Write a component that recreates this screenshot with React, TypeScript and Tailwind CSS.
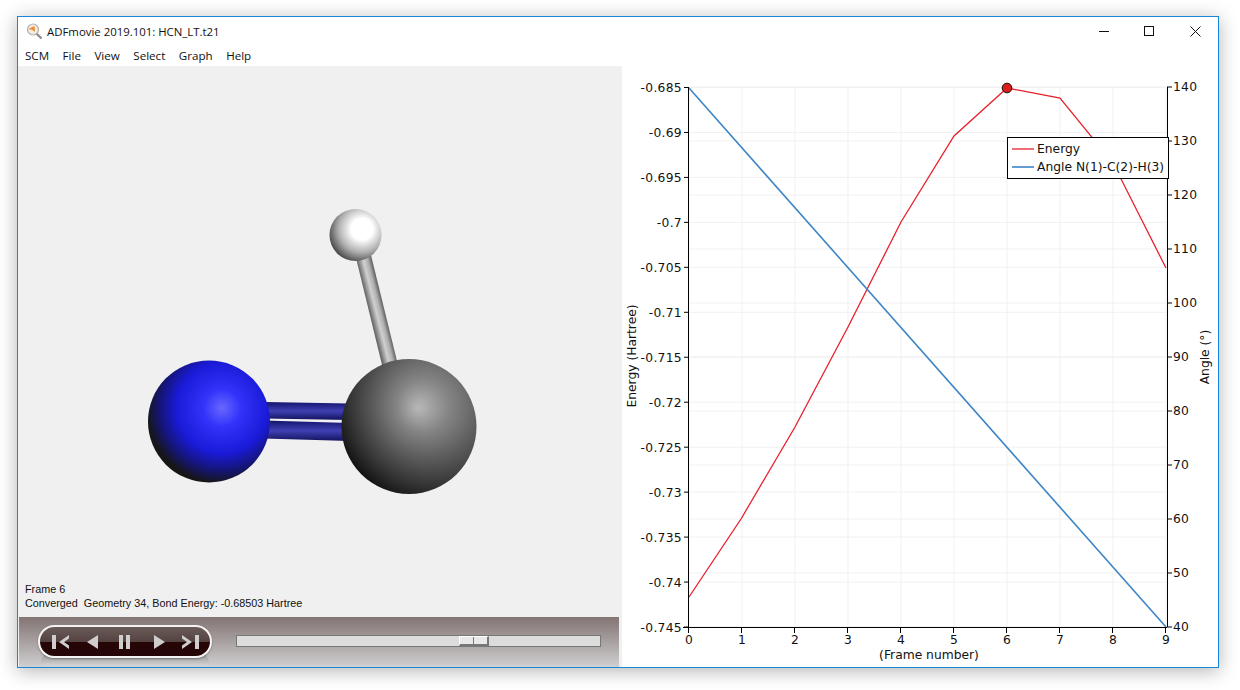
import React from 'react';

const MENU_ITEMS = ['SCM', 'File', 'View', 'Select', 'Graph', 'Help'];

const ENERGY_LABELS = ['-0.685', '-0.69', '-0.695', '-0.7', '-0.705', '-0.71', '-0.715', '-0.72', '-0.725', '-0.73', '-0.735', '-0.74', '-0.745'];
const ANGLE_LABELS = ['140', '130', '120', '110', '100', '90', '80', '70', '60', '50', '40'];
const FRAME_LABELS = ['0', '1', '2', '3', '4', '5', '6', '7', '8', '9'];

const ENERGY_POINTS = '689,597 741,519 795,427 848,327 901,222 954,136 1007,88 1060,98 1113,163 1166,268';

const frameX = (i: number) => 689 + i * 53;
const energyY = (i: number) => 87.5 + i * 44.96;
const angleY = (i: number) => 87 + i * 54;

function AppIcon() {
  return (
    <svg width="17" height="17" viewBox="0 0 17 17" className="shrink-0">
      <line x1="10" y1="10" x2="15.5" y2="15.5" stroke="#8a8a8a" strokeWidth="2.2" />
      <circle cx="7" cy="6.5" r="5.5" fill="#f1ece6" stroke="#b5aca4" strokeWidth="1.2" />
      <path d="M2.5 6 L8.5 3 L9 9 L6.5 7 Z" fill="#f08a2c" />
    </svg>
  );
}

function WindowButtons() {
  return (
    <div className="flex items-center">
      <svg width="46" height="28" viewBox="0 0 46 28">
        <line x1="19" y1="14.5" x2="29" y2="14.5" stroke="#111" />
      </svg>
      <svg width="46" height="28" viewBox="0 0 46 28">
        <rect x="18.5" y="9.5" width="9" height="9" fill="none" stroke="#111" />
      </svg>
      <svg width="46" height="28" viewBox="0 0 46 28">
        <path d="M18.5 9.5 L28.5 19.5 M28.5 9.5 L18.5 19.5" stroke="#111" fill="none" />
      </svg>
    </div>
  );
}

function Molecule() {
  return (
    <svg viewBox="18 66 601 510" className="h-[510px] w-[601px]">
      <defs>
        <radialGradient id="blueAtom" gradientUnits="userSpaceOnUse" cx="222" cy="408" r="76">
          <stop offset="0" stopColor="#6868ff" />
          <stop offset="0.25" stopColor="#3232fa" />
          <stop offset="0.6" stopColor="#1a1ad8" />
          <stop offset="0.82" stopColor="#151578" />
          <stop offset="1" stopColor="#161616" />
        </radialGradient>
        <radialGradient id="greyAtom" gradientUnits="userSpaceOnUse" cx="438" cy="400" r="106" fx="418" fy="408">
          <stop offset="0" stopColor="#b8b8b8" />
          <stop offset="0.25" stopColor="#848484" />
          <stop offset="0.5" stopColor="#5e5e5e" />
          <stop offset="0.8" stopColor="#333333" />
          <stop offset="1" stopColor="#141414" />
        </radialGradient>
        <radialGradient id="whiteAtom" gradientUnits="userSpaceOnUse" cx="362" cy="229" r="36">
          <stop offset="0" stopColor="#ffffff" />
          <stop offset="0.3" stopColor="#ffffff" />
          <stop offset="0.65" stopColor="#b0b0b0" />
          <stop offset="1" stopColor="#3c3c3c" />
        </radialGradient>
        <linearGradient id="hBond" gradientUnits="userSpaceOnUse" x1="370" y1="314" x2="384" y2="310.5">
          <stop offset="0" stopColor="#666666" />
          <stop offset="0.45" stopColor="#d0d0d0" />
          <stop offset="0.75" stopColor="#b0b0b0" />
          <stop offset="1" stopColor="#6b6b6b" />
        </linearGradient>
        <linearGradient id="blueBond" x1="0" y1="0" x2="0" y2="1">
          <stop offset="0" stopColor="#14146e" />
          <stop offset="0.5" stopColor="#4040b4" />
          <stop offset="1" stopColor="#12125e" />
        </linearGradient>
      </defs>
      <polygon points="356,258 371,255 398,365 383,369" fill="url(#hBond)" />
      <polygon points="264,402 350,403.5 350,420 264,418.5" fill="url(#blueBond)" />
      <polygon points="264,420.5 350,423 350,441 264,438.5" fill="url(#blueBond)" />
      <circle cx="209" cy="421.5" r="61" fill="url(#blueAtom)" />
      <circle cx="409" cy="426.5" r="67.5" fill="url(#greyAtom)" />
      <circle cx="355.5" cy="235" r="26" fill="url(#whiteAtom)" />
    </svg>
  );
}

function PlayerControls() {
  return (
    <div className="relative">
      <div className="absolute left-[3px] top-[27px] h-[14px] w-[168px] rounded-b-[4px] rounded-t-[14px] bg-gradient-to-b from-[#8f8b8b] to-[#d6d6d6]" />
      <div className="relative flex h-[33px] w-[174px] items-center overflow-hidden rounded-full border-2 border-[#f4f4f4] bg-gradient-to-b from-[#6a5a58] from-0% via-[#544341] via-50% to-[#250505] to-50% pl-[12px] shadow-[0_1px_2px_rgba(0,0,0,0.35)]">
        <svg width="18" height="14" viewBox="0 0 18 14" fill="#cfcdcd">
          <rect x="0" y="0" width="4" height="14" />
          <path d="M17 0 L7 7 L17 14 L17 10.5 L12 7 L17 3.5 Z" />
        </svg>
        <svg width="12" height="14" viewBox="0 0 12 14" fill="#cfcdcd" className="ml-[17px]">
          <path d="M11 0 L0 7 L11 14 Z" />
        </svg>
        <svg width="12" height="14" viewBox="0 0 12 14" fill="#cfcdcd" className="ml-[20px]">
          <rect x="0" y="0" width="4" height="14" />
          <rect x="7" y="0" width="4" height="14" />
        </svg>
        <svg width="12" height="14" viewBox="0 0 12 14" fill="#cfcdcd" className="ml-[22px]">
          <path d="M1 0 L12 7 L1 14 Z" />
        </svg>
        <svg width="18" height="14" viewBox="0 0 18 14" fill="#cfcdcd" className="ml-[16px]">
          <rect x="14" y="0" width="4" height="14" />
          <path d="M1 0 L11 7 L1 14 L1 10.5 L6 7 L1 3.5 Z" />
        </svg>
      </div>
    </div>
  );
}

function Slider() {
  return (
    <div className="flex h-[12px] w-[365px] items-stretch border border-[#777] bg-[#dcdcdc] pl-[222px]">
      <div className="flex h-[10px] w-[30px] border-b-2 border-r-2 border-b-[#777] border-r-[#777] border-t border-l border-t-white border-l-white bg-[#e9e9e9]">
        <div className="w-[14px] border-r border-[#777]" />
      </div>
    </div>
  );
}

function Chart() {
  const axisText = { fontFamily: '"DejaVu Sans", sans-serif', fontSize: 12.3, fill: '#111' };
  return (
    <svg viewBox="622 66 596 601" className="h-[601px] w-[596px]">
      {ENERGY_LABELS.map((_, i) => (
        <line key={i} x1="689" x2="1166" y1={energyY(i)} y2={energyY(i)} stroke="#f1f1f1" />
      ))}
      {ANGLE_LABELS.map((_, i) => (
        <line key={i} x1="689" x2="1166" y1={angleY(i)} y2={angleY(i)} stroke="#f1f1f1" />
      ))}
      {FRAME_LABELS.map((_, i) => (
        <line key={i} x1={frameX(i)} x2={frameX(i)} y1="88" y2="627" stroke="#f1f1f1" />
      ))}

      <polyline points={ENERGY_POINTS} fill="none" stroke="#e8202a" strokeWidth="1.3" />
      <line x1="689" y1="88" x2="1166" y2="627" stroke="#3d85c6" strokeWidth="1.6" />
      <circle cx="1007" cy="88" r="4.8" fill="#e01b1b" stroke="#111" strokeWidth="1" />

      <line x1="688.5" x2="688.5" y1="87" y2="633" stroke="#000" />
      <line x1="1167.5" x2="1167.5" y1="87" y2="627" stroke="#000" />
      <line x1="683" x2="1167" y1="627.5" y2="627.5" stroke="#000" />

      {ENERGY_LABELS.map((label, i) => (
        <g key={label}>
          <line x1="684" x2="689" y1={energyY(i)} y2={energyY(i)} stroke="#000" />
          <text x="682" y={energyY(i) + 4.5} textAnchor="end" letterSpacing="0.3" {...axisText}>{label}</text>
        </g>
      ))}
      {ANGLE_LABELS.map((label, i) => (
        <g key={label}>
          <line x1="1167" x2="1172" y1={angleY(i)} y2={angleY(i)} stroke="#000" />
          <text x="1173" y={angleY(i) + 3.5} letterSpacing="0.3" {...axisText}>{label}</text>
        </g>
      ))}
      {FRAME_LABELS.map((label, i) => (
        <g key={label}>
          <line x1={frameX(i) - 0.5} x2={frameX(i) - 0.5} y1="627" y2="633" stroke="#000" />
          <text x={frameX(i)} y="644" textAnchor="middle" {...axisText}>{label}</text>
        </g>
      ))}

      <text x="929" y="659" textAnchor="middle" {...axisText}>(Frame number)</text>
      <text transform="translate(636 356) rotate(-90)" textAnchor="middle" {...axisText}>Energy (Hartree)</text>
      <text transform="translate(1209 357) rotate(-90)" textAnchor="middle" {...axisText}>Angle (°)</text>

      <rect x="1007.5" y="137.5" width="161" height="41" fill="#fff" stroke="#000" />
      <line x1="1012" x2="1034" y1="149" y2="149" stroke="#e8202a" strokeWidth="1.3" />
      <line x1="1012" x2="1034" y1="167" y2="167" stroke="#3d85c6" strokeWidth="1.6" />
      <text x="1037" y="153" {...axisText}>Energy</text>
      <text x="1037" y="171" {...axisText}>Angle N(1)-C(2)-H(3)</text>
    </svg>
  );
}

export default function App() {
  return (
    <div className="h-[690px] w-[1240px] overflow-hidden bg-white pl-[17px] pt-[16px]">
      <div className="flex h-[652px] w-[1202px] flex-col border border-[#1a86d8] bg-white font-['Open_Sans',sans-serif] text-[11.4px] text-[#111] shadow-[0_3px_18px_rgba(0,0,0,0.3)]">
        <div className="flex h-[28px] items-center justify-between pl-[8px]">
          <div className="flex items-center gap-[4px] pt-[1px]">
            <AppIcon />
            <span>ADFmovie 2019.101: HCN_LT.t21</span>
          </div>
          <WindowButtons />
        </div>
        <div className="flex h-[21px] items-center gap-[13.5px] pl-[7px] pt-[1px] text-[11.6px]">
          {MENU_ITEMS.map((item) => (
            <span key={item}>{item}</span>
          ))}
        </div>

        <div className="flex flex-1 bg-[#f0f0f0]">
          <div className="flex w-[601px] flex-col">
            <Molecule />
            <div className="h-[41px] pl-[7px] pt-[6px] font-['Liberation_Sans',sans-serif] text-[10.8px] leading-[14px] text-[#111]">
              <div>Frame 6</div>
              <div className="whitespace-pre">Converged  Geometry 34, Bond Energy: -0.68503 Hartree</div>
            </div>
            <div className="ml-[1px] flex h-[50px] items-start gap-[24px] bg-gradient-to-b from-[#827574] to-[#d0d0d0] pl-[19px] pt-[8px]">
              <PlayerControls />
              <div className="pt-[10px]">
                <Slider />
              </div>
            </div>
          </div>
          <div className="ml-[3px] h-[601px] w-[596px] bg-white">
            <Chart />
          </div>
        </div>
      </div>
    </div>
  );
}
